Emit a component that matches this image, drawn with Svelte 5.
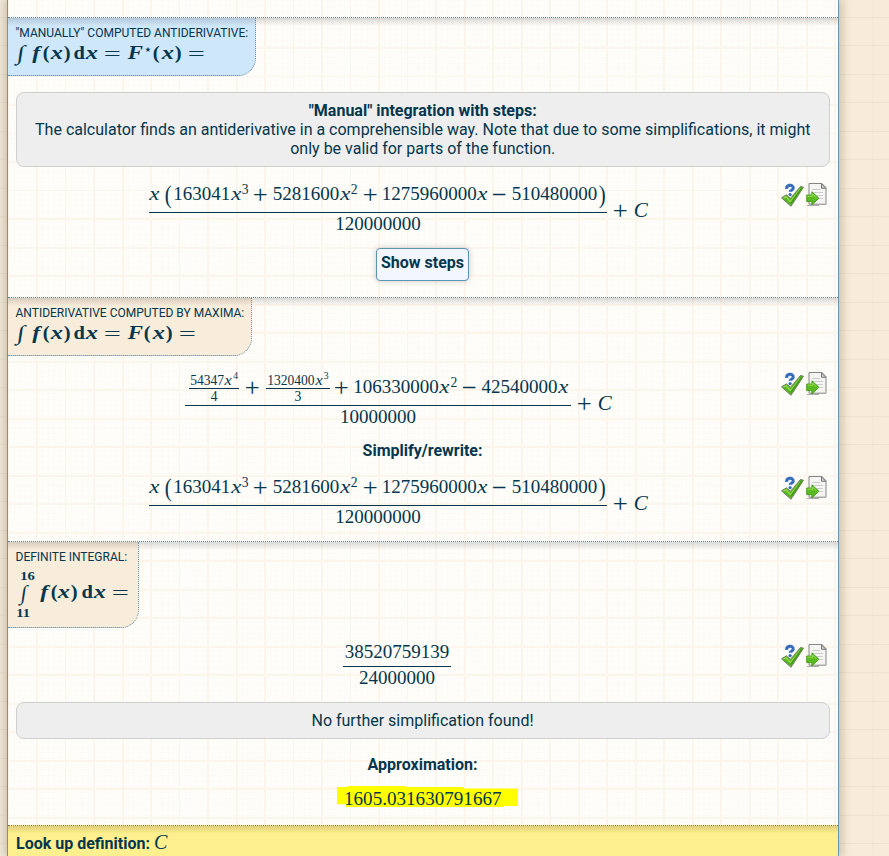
<script>
  // Every token is [text, cell width in px, class]
  const n = (s) => [s, s.length * 9.52, 'num'];
  const x = ['x', 11.07, 'var'];
  const sup = (s) => [s, 7.7, 'sup'];
  const op = (s) => [s, 23.7, 'op'];
  const polynomial = [
    x, ['', 3.6, ''], ['(', 9.3, 'paren'], n('163041'), x, sup('3'), op('+'),
    n('5281600'), x, sup('2'), op('+'), n('1275960000'), x, op('−'),
    n('510480000'), [')', 9.3, 'paren']
  ];
  const rest = [op('+'), n('106330000'), x, sup('2'), op('−'), n('42540000'), x];
  const integrand = [
    ['f', 12, 'bi fn'], ['(', 7.5, 'br'], ['x', 13, 'bi wide'], [')', 8, 'br'],
    ['', 3, ''], ['d', 11.5, 'br'], ['x', 13, 'bi wide'], ['=', 28, 'eq']
  ];
  const manual = [['∫', 14.5, 'int'], ...integrand, ['F', 17, 'bi wider'], ['⋆', 9, 'star'], ['(', 8, 'br'], ['x', 13.5, 'bi wide'], [')', 8, 'br'], ['=', 28, 'eq']];
  const maxima = [['∫', 14.5, 'int'], ...integrand, ['F', 17, 'bi wider'], ['(', 8, 'br'], ['x', 13.5, 'bi wide'], [')', 8, 'br'], ['=', 28, 'eq']];
</script>

{#snippet tokens(list)}
  <span class="tokens">{#each list as [text, width, kind]}<span class="tok {kind}" style="width:{width}px"><i>{text}</i></span>{/each}</span>
{/snippet}

{#snippet smallFrac(digits, power, bottom)}
  <span class="small-frac">
    <span class="stop"><span>{digits}</span><span class="sx">x</span><span class="sp">{power}</span></span>
    <span class="sbottom">{bottom}</span>
  </span>
{/snippet}

{#snippet constant()}
  <span class="constant">{@render tokens([op('+'), ['C', 14.5, 'cap']])}</span>
{/snippet}

{#snippet icons()}
  <span class="icons">
    <svg width="24" height="26" viewBox="0 0 24 26">
      <path d="M1.5 15.8 6.5 12.8l3.8 3.7L20.5 4.5l3 .7L11 24.3z" fill="#55b51e" stroke="#76806b" stroke-width="1" stroke-linejoin="round" />
      <path d="m3.6 16.2 2.5-1.5 4.2 5L20.8 6.4" fill="none" stroke="#93d94f" stroke-width="1.4" />
      <path d="M10.8 21.5 21.9 6" stroke="#429c18" stroke-width="1.6" />
      <path d="M6.6 6.9c-.1-4.6 6.6-4.6 6.6-1 0 2.6-3 2-3 3.9" fill="none" stroke="#e9f0fc" stroke-width="4.6" />
      <path d="M6.6 6.9c-.1-4.6 6.6-4.6 6.6-1 0 2.6-3 2-3 3.9" fill="none" stroke="#386cb8" stroke-width="3" />
      <circle cx="10.1" cy="12.6" r="1.6" fill="#386cb8" />
    </svg>
    <svg width="22" height="26" viewBox="0 0 22 26">
      <path d="M3 1.5h13l4 4.2v16.5H3z" fill="#f5f5f3" stroke="#858585" stroke-width="1" />
      <path d="M15.5 1.8v4.5h4.3z" fill="#d5d5d5" stroke="#777" />
      <path d="M6 7.5h8M6 10.5h11M10 13.5h7M13 16.5h4" stroke="#ccc" />
      <path d="M1 23.5h12" stroke="#aaa" />
      <path d="M.7 13h5.2V9.8l7 6.5-7 6.5v-3.2H.7z" fill="#5abb20" stroke="#439719" stroke-width=".9" />
      <path d="M1.5 14.2h5.2v-2l3.6 3.5" fill="none" stroke="#9be256" stroke-width="1" />
    </svg>
  </span>
{/snippet}

{#snippet result()}
  <div class="formula">
    <div class="expression">
      <span class="frac"><span class="top">{@render tokens(polynomial)}</span><span class="bottom">120000000</span></span>
      {@render constant()}
    </div>
    {@render icons()}
  </div>
{/snippet}

<div class="page">
  <main>
    <div class="previous"></div>
    <section class="manual">
      <div class="tag blue"><h2>"Manually" computed antiderivative:</h2>{@render tokens(manual)}</div>
      <div class="message intro"><b>"Manual" integration with steps:</b><br />The calculator finds an antiderivative in a comprehensible way. Note that due to some simplifications, it might only be valid for parts of the function.</div>
      {@render result()}
      <button>Show steps</button>
    </section>

    <section class="maxima">
      <div class="tag"><h2>Antiderivative computed by Maxima:</h2>{@render tokens(maxima)}</div>
      <div class="formula raw">
        <div class="expression">
          <span class="frac">
            <span class="top nested">{@render smallFrac('54347', '4', '4')}{@render tokens([['+', 27, 'op']])}{@render smallFrac('1320400', '3', '3')}{@render tokens(rest)}</span>
            <span class="bottom">10000000</span>
          </span>
          {@render constant()}
        </div>
        {@render icons()}
      </div>
      <div class="caption simplify">Simplify/rewrite:</div>
      {@render result()}
    </section>

    <section class="definite">
      <div class="tag"><h2>Definite integral:</h2>
        <div class="bounds"><span class="limits"><span class="upper">16</span><span class="sign">∫</span><span class="lower">11</span></span>{@render tokens(integrand)}</div>
      </div>
      <div class="formula">
        <div class="expression"><span class="frac exact"><span class="top">38520759139</span><span class="bottom">24000000</span></span></div>
        {@render icons()}
      </div>
      <div class="message none">No further simplification found!</div>
      <div class="caption approx">Approximation:</div>
      <div class="value"><span>1605.031630791667</span></div>
    </section>
    <footer><b>Look up definition:</b> <span class="c">C</span></footer>
  </main>
</div>

<style>
  :global(body) { margin: 0; overflow: hidden; }
  * { box-sizing: border-box; }
  .page {
    height: 856px;
    padding-left: 7px;
    overflow: hidden;
    color: #04364e;
    font: 16px/19px Roboto, sans-serif;
    background:
      repeating-linear-gradient(90deg, transparent 0 27.5px, #8a70400c 27.5px 28.5px) 18.5px 0 / 1140px 100%,
      repeating-linear-gradient(transparent 0 27.5px, #8a704012 27.5px 28.5px) 0 -10.5px / 100% 1140px,
      #f7ecda;
  }
  main {
    width: 832px;
    height: 856px;
    border: solid #6696b4;
    border-width: 0 1px;
    box-shadow: 0 0 10px 2px #5a4a2850;
    background:
      repeating-linear-gradient(90deg, #fbf5ec 0 1.5px, transparent 1.5px 28.5px),
      repeating-linear-gradient(#fbf5ec 0 1.5px, transparent 1.5px 28.5px) 0 -9.5px / 100% 1140px,
      repeating-linear-gradient(90deg, #f8f4ea33 0 1px, transparent 1px 5.7px),
      repeating-linear-gradient(#f8f4ea33 0 1px, transparent 1px 5.7px),
      #fefdf9;
  }
  .previous { height: 17px; }
  section, footer {
    border-top: 1px dotted #5d849c;
    background: linear-gradient(#00000024, transparent 8px);
  }
  .manual { height: 280px; }
  .maxima { height: 244px; }
  .definite { height: 284px; }
  .tag {
    width: fit-content;
    height: 58px;
    padding: 7px 7px 0 8px;
    border: dotted #6b94ad;
    border-width: 0 1px 1px 0;
    border-radius: 0 0 18px;
    background: linear-gradient(#00000022, transparent 8px), #f8ecda;
  }
  .blue { background: linear-gradient(#00000022, transparent 8px), #cfe7fa; }
  h2 { margin: 0 0 0 -0.5px; font-size: 12px; line-height: 17px; font-weight: 400; text-transform: uppercase; white-space: nowrap; }
  .tag > :global(.tokens) { margin-top: -1px; }
  .tokens { display: flex; font: 19px/24px "Liberation Serif", serif; }
  .tok { display: block; text-align: center; white-space: nowrap; }
  .tok i { display: inline-block; font-style: normal; }
  .var i { font-style: italic; transform: scaleX(1.2); }
  .cap i { font-style: italic; font-size: 20px; transform: translateX(1px) scaleX(1.05); }
  .sup i { font-size: 13.55px; line-height: 13px; transform: translateY(-6px); }
  .op i { transform: translateY(1px) scale(1.4, 1.35); }
  .paren i { transform: translateY(1px) scale(1.1, 1.3); }
  .bi i { font-style: italic; font-weight: 700; }
  .fn i { transform: scaleX(1.25); }
  .wide i { transform: scaleX(1.28); }
  .wider i { transform: scaleX(1.2); }
  .br i { font-weight: 700; transform: scaleX(1.08); }
  .eq i { transform: translateY(1px) scaleX(1.6); }
  .int i { font-size: 21px; transform: translateX(2px) skewX(-8deg) scaleX(1.25); }
  .int { text-align: left; }
  .star { display: flex; justify-content: center; }
  .star i { font: 14px/14px "DejaVu Sans", sans-serif; transform: translateY(1px); }
  .message {
    margin: 0 8px;
    border: 1px solid #cfcfcf;
    border-radius: 8px;
    background: #eee;
    text-align: center;
  }
  .intro { height: 75px; margin-top: 16px; padding: 8px 14.5px 8px 14px; }
  .formula { display: flex; height: 66px; margin-top: 15px; padding-right: 10px; }
  .expression { flex: 1; display: flex; justify-content: center; padding-left: 8px; font: 19px/24px "Liberation Serif", serif; }
  .frac { display: block; height: 53px; text-align: center; }
  .top { display: block; height: 31px; border-bottom: 1px solid #04364e; }
  .bottom { display: block; line-height: 20px; padding-top: 1px; }
  .constant { margin: 16px 0 0 2px; }
  .icons { display: flex; width: 48px; }
  .icons svg + svg { margin-left: 2px; }
  button {
    display: block;
    width: 93px;
    height: 33px;
    margin: 0 auto 0 368px;
    padding: 0 0 5px;
    border: 1px solid #5c93b1;
    border-radius: 4px;
    background: #f2f7ff;
    box-shadow: 0 0 6px #0003;
    color: inherit;
    font: 700 16px Roboto, sans-serif;
    white-space: nowrap;
  }
  .raw { margin-top: 19px; height: 60px; }
  .raw .icons { margin-top: -4px; }
  .nested { display: flex; padding: 0 2px 0 4px; }
  .small-frac { display: block; margin-top: -2px; font-size: 13.55px; }
  .stop { display: flex; height: 16px; line-height: 15px; padding: 0 1px; border-bottom: 1px solid #04364e; }
  .sx { width: 8px; font-style: italic; text-align: center; transform: scaleX(1.2); }
  .sp { width: 6px; font-size: 9.68px; line-height: 6px; text-align: right; }
  .sbottom { display: block; line-height: 16px; }
  .caption { padding-right: 1px; text-align: center; font-weight: 700; }
  .simplify { margin-top: 6px; }
  .definite .tag { width: 131px; height: 86px; }
  .bounds { display: flex; }
  .bounds > :global(.tokens) { margin-top: 14px; }
  .limits { flex: none; width: 22px; font: 700 13.55px/12px "Liberation Serif", serif; }
  .upper, .lower, .sign { display: block; }
  .upper, .lower { width: fit-content; font-size: 13px; transform: scaleX(1.12); }
  .upper { margin-left: 5px; padding-top: 4px; line-height: 12px; }
  .sign { padding-left: 5px; font-size: 21px; font-weight: 400; line-height: 23px; transform: skewX(-8deg); }
  .lower { margin-left: 1px; line-height: 15px; }
  .definite .formula { margin-top: 12px; height: 62px; }
  .definite .icons { margin-top: 3px; }
  .exact { margin-left: -2px; }
  .exact .top { height: 27px; padding: 0 2px; line-height: 24px; }
  .none { height: 37px; padding-top: 8px; padding-right: 1px; }
  .approx { margin-top: 16px; }
  .value { display: flex; justify-content: center; margin-top: 12px; font: 19.1px/19px "Liberation Serif", serif; }
  .value span {
    width: 181px;
    height: 21px;
    padding: 3px 0 0 7px;
    margin-left: 9px;
    background: #ff0;
    clip-path: polygon(0 5%, 6% 5%, 6% 0, 38% 0, 38% 5%, 70% 5%, 70% 12%, 100% 12%, 100% 95%, 92% 95%, 92% 100%, 5% 100%, 5% 87%, 0 87%);
  }
  footer { height: 31px; padding: 8px; background: linear-gradient(#00000022, transparent 8px), #fff08f; }
  .c { font: italic 20px/16px "Liberation Serif", serif; }
</style>
